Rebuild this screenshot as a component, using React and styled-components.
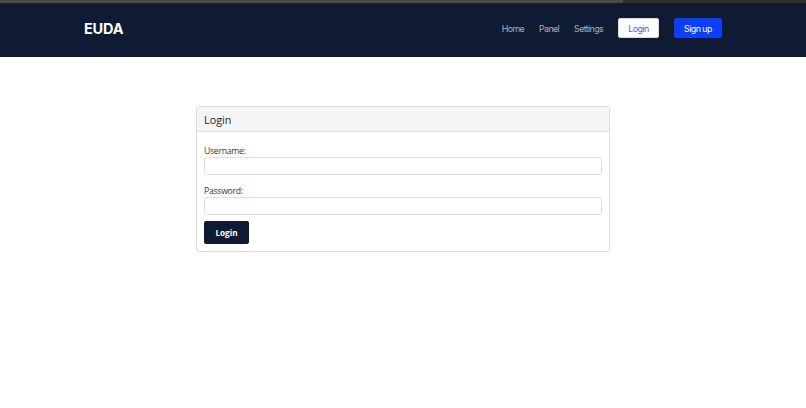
import React from 'react';
import styled, { createGlobalStyle } from 'styled-components';

const Global = createGlobalStyle`
  body {
    margin: 0;
    background: #fff;
    font-family: "Open Sans", "Noto Sans", sans-serif;
  }
  * { box-sizing: border-box; }
`

const TopStrip = styled.div`
  height: 3px;
  background: linear-gradient(to right, #4a4a4a 0, #4a4a4a 623px, #2f2f2f 623px);
`

const Navbar = styled.nav`
  height: 54px;
  background: #0f1b33;
`

const NavInner = styled.div`
  width: 638px;
  height: 100%;
  margin: 0 auto;
  padding-bottom: 4px;
  display: flex;
  align-items: center;
  justify-content: space-between;
`

const Brand = styled.a`
  font-family: Inter, sans-serif;
  font-weight: 700;
  font-size: 14.5px;
  color: #fff;
  letter-spacing: -0.2px;
  text-decoration: none;
`

const Links = styled.div`
  display: flex;
  align-items: center;
  gap: 15px;
`

const NavLink = styled.a`
  font-family: Inter, sans-serif;
  font-size: 8.8px;
  letter-spacing: -0.6px;
  color: #a9b0be;
  text-decoration: none;
`

const NavButton = styled.a`
  font-family: Inter, sans-serif;
  font-size: 8.8px;
  letter-spacing: -0.5px;
  width: ${p => p.$w}px;
  height: 20px;
  display: flex;
  align-items: center;
  justify-content: center;
  border-radius: 2px;
  text-decoration: none;
  background: ${p => p.$primary ? '#0b3ff5' : '#fff'};
  color: ${p => p.$primary ? '#fff' : '#5159d8'};
  border: 1px solid ${p => p.$primary ? '#0b3ff5' : '#d9d9d9'};
`

const Main = styled.main`
  padding-top: 49px;
`

const Card = styled.div`
  width: 414px;
  margin: 0 auto;
  border: 1px solid #dcdcdc;
  border-radius: 3px;
  overflow: hidden;
`

const CardHeader = styled.div`
  height: 25px;
  padding: 0 7px;
  display: flex;
  align-items: center;
  background: #f5f5f5;
  border-bottom: 1px solid #dcdcdc;
  font-size: 10.8px;
  font-weight: 500;
  color: #222;
`

const CardBody = styled.form`
  padding: 13px 7px 7px;
  display: flex;
  flex-direction: column;
`

const Field = styled.div`
  display: flex;
  flex-direction: column;
  margin-bottom: ${p => p.$last ? '6px' : '10px'};
`

const Label = styled.label`
  height: 12px;
  line-height: 12px;
  font-size: 8.7px;
  letter-spacing: -0.3px;
  color: #3a3a3a;
`

const Input = styled.input`
  height: 18px;
  border: 1px solid #dedede;
  border-radius: 3px;
  background: #fff;
  padding: 0 6px;
  font-size: 8px;
`

const SubmitButton = styled.button`
  width: 45px;
  height: 23px;
  border: none;
  border-radius: 2px;
  background: #0f1b33;
  color: #fff;
  font-family: "Open Sans", sans-serif;
  font-weight: 700;
  font-size: 8.2px;
  padding: 0;
  cursor: pointer;
`

const App = () =>
  <>
    <Global />
    <TopStrip />
    <Navbar>
      <NavInner>
        <Brand href="#">EUDA</Brand>
        <Links>
          <NavLink href="#">Home</NavLink>
          <NavLink href="#">Panel</NavLink>
          <NavLink href="#">Settings</NavLink>
          <NavButton $w={41} href="#">Login</NavButton>
          <NavButton $w={48} $primary href="#">Sign up</NavButton>
        </Links>
      </NavInner>
    </Navbar>
    <Main>
      <Card>
        <CardHeader>Login</CardHeader>
        <CardBody onSubmit={e => e.preventDefault()}>
          <Field>
            <Label htmlFor="username">Username:</Label>
            <Input id="username" type="text" />
          </Field>
          <Field $last>
            <Label htmlFor="password">Password:</Label>
            <Input id="password" type="password" />
          </Field>
          <SubmitButton type="submit">Login</SubmitButton>
        </CardBody>
      </Card>
    </Main>
  </>

export default App;
